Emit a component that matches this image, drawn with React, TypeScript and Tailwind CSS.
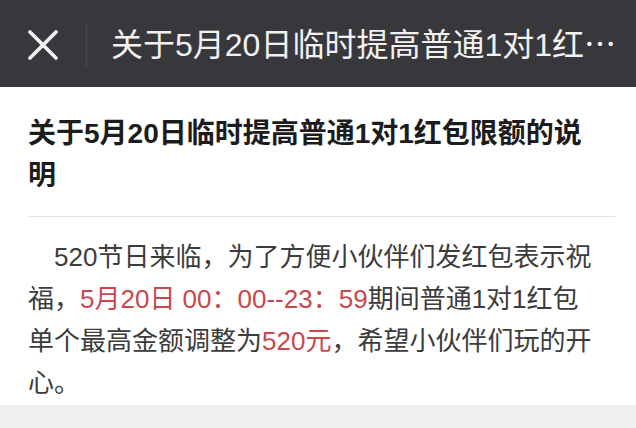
import React from "react";

export default function App() {
  return (
    <div className="w-[636px] h-[428px] overflow-hidden bg-[#efeff1] font-['Liberation_Sans','Noto_Sans_CJK_SC',sans-serif]">
      <header className="h-[87px] bg-[#38383c] flex items-center">
        <svg
          className="ml-[28px] mt-[3px] shrink-0"
          width="30"
          height="30"
          viewBox="0 0 30 30"
          fill="none"
        >
          <path d="M2 2 L28 28 M28 2 L2 28" stroke="#f4f4f4" strokeWidth="3.6" strokeLinecap="round" />
        </svg>
        <div className="ml-[28px] mt-[4px] w-px h-[45px] bg-[#48484d] shrink-0" />
        <div className="ml-[24px] text-[32px] leading-[44px] text-[#f2f2f2] whitespace-nowrap shrink-0">
          关于5月20日临时提高普通1对1红<span className="font-['Noto_Sans_CJK_SC',sans-serif]">…</span>
        </div>
      </header>
      <main className="bg-white px-[28px] pt-[26px] pb-[1px]">
        <h1 className="w-[570px] text-[28px] font-bold leading-[42px] text-[#1c1c1c]">
          关于5月20日临时提高普通1对1红包限额的说明
        </h1>
        <div className="mt-[19px] h-px w-[587px] bg-[#e4e4e6]" />
        <p className="mt-[19px] text-[26px] leading-[42px] text-[#3c3c3c] whitespace-nowrap">
          <span className="pl-[26px]">520节日来临，为了方便小伙伴们发红包表示祝</span>
          <br />
          福，<span className="text-[#c9474d]">5月20日 00：00--23：59</span>期间普通1对1红包
          <br />
          单个最高金额调整为<span className="text-[#c9474d]">520元</span>，希望小伙伴们玩的开
          <br />
          心。
        </p>
      </main>
    </div>
  );
}
